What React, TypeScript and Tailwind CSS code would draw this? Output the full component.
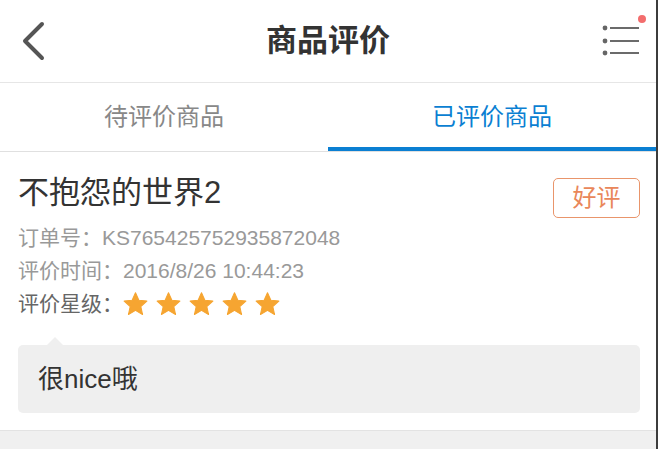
const font = { fontFamily: '"Liberation Sans", "Noto Sans CJK SC", sans-serif' };

function BackIcon() {
  return (
    <svg width="30" height="40" viewBox="0 0 30 40">
      <polyline
        points="23,3 6,20 23,37"
        fill="none"
        stroke="#555"
        strokeWidth="4"
        strokeLinecap="round"
        strokeLinejoin="round"
      />
    </svg>
  );
}

function Star() {
  return (
    <svg width="27" height="26" viewBox="0 0 24 24" className="shrink-0">
      <path
        d="M12 1.6l3.1 6.9 7.4.8-5.6 5 1.6 7.4L12 17.9l-6.5 3.8 1.6-7.4-5.6-5 7.4-.8z"
        fill="#f6a531"
        stroke="#f6a531"
        strokeWidth="1"
        strokeLinejoin="round"
      />
    </svg>
  );
}

function MenuIcon() {
  return (
    <svg width="48" height="48" viewBox="0 0 48 48">
      <circle cx="7" cy="16" r="2.4" fill="#666" />
      <circle cx="7" cy="29" r="2.4" fill="#666" />
      <circle cx="7" cy="41" r="2.4" fill="#666" />
      <rect x="12" y="15" width="29" height="2" fill="#6b6b6b" />
      <rect x="12" y="28" width="29" height="2" fill="#6b6b6b" />
      <rect x="12" y="40" width="29" height="2" fill="#6b6b6b" />
      <circle cx="44" cy="7" r="4" fill="#f36d6d" />
    </svg>
  );
}

export default function App() {
  return (
    <div
      className="flex min-h-screen w-full flex-col bg-[#f0f0f0] border-r-2 border-[#3c3c3c]"
      style={font}
    >
      {/* top bar */}
      <header className="relative flex h-[83px] items-center justify-center border-b border-[#e6e6e6] bg-white">
        <button className="absolute left-[19px] top-[21px]">
          <BackIcon />
        </button>
        <h1 className="text-[31px] font-bold text-[#333]">商品评价</h1>
        <button className="absolute right-[10px] top-[12px]">
          <MenuIcon />
        </button>
      </header>

      {/* tabs */}
      <nav className="flex h-[69px] border-b border-[#e0e0e0] bg-white">
        <div className="flex flex-1 items-center justify-center text-[24px] text-[#888]">
          待评价商品
        </div>
        <div className="flex flex-1 items-center justify-center border-b-4 border-[#0b7fd2] pt-1 text-[24px] text-[#0b7fd2]">
          已评价商品
        </div>
      </nav>

      {/* reviewed item */}
      <section className="border-b border-[#e3e3e3] bg-white pb-[17px] pl-[18px] pr-[16px] pt-[21px]">
        <div className="flex items-start justify-between">
          <h2 className="text-[31px] leading-[40px] text-[#333]">不抱怨的世界2</h2>
          <span className="mt-[5px] flex h-[40px] w-[87px] items-center justify-center rounded-[5px] border border-[#e9956b] text-[24px] text-[#e9875a]">
            好评
          </span>
        </div>
        <p className="mt-[3px] text-[21px] leading-[33px] text-[#999]">
          订单号：KS765425752935872048
        </p>
        <p className="text-[21px] leading-[33px] text-[#999]">
          评价时间：2016/8/26 10:44:23
        </p>
        <div className="flex h-[34px] items-center gap-[6px] text-[21px] text-[#666]">
          <span className="mr-[-7px]">评价星级：</span>
          <Star />
          <Star />
          <Star />
          <Star />
          <Star />
        </div>

        <div className="relative mt-[24px] flex h-[68px] items-center rounded-[5px] bg-[#efefef] px-[20px] text-[26px] text-[#333]">
          <span className="absolute left-[29px] top-[-8px] h-0 w-0 border-x-[8px] border-b-[8px] border-x-transparent border-b-[#efefef]" />
          很nice哦
        </div>
      </section>
    </div>
  );
}
